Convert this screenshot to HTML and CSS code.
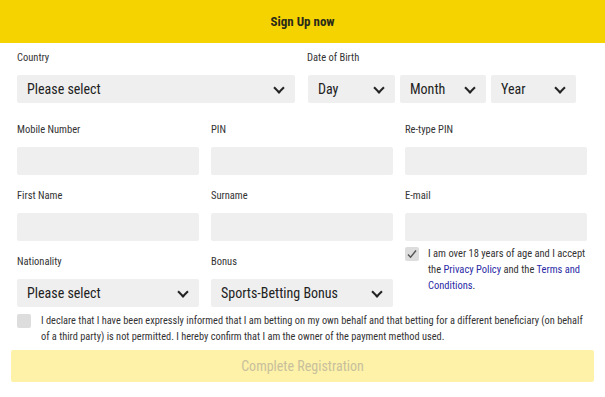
FILE: index.html
```html
<!DOCTYPE html>
<html lang="en">
<head>
    <meta charset="UTF-8"/>
    <meta name="viewport" content="width=device-width, initial-scale=1.0"/>
    <title>Sign Up</title>
    <link rel="stylesheet" href="styles.css">
</head>
<body>

<header class="header">
    <h1>Sign Up now</h1>
</header>

<main class="form">
    <div class="row row-top">
        <div class="field">
            <label>Country</label>
            <div class="select">Please select</div>
        </div>
        <div class="field">
            <label>Date of Birth</label>
            <div class="dob">
                <div class="select">Day</div>
                <div class="select">Month</div>
                <div class="select">Year</div>
            </div>
        </div>
    </div>

    <div class="row">
        <div class="field">
            <label>Mobile Number</label>
            <div class="input"></div>
        </div>
        <div class="field">
            <label>PIN</label>
            <div class="input"></div>
        </div>
        <div class="field">
            <label>Re-type PIN</label>
            <div class="input"></div>
        </div>
    </div>

    <div class="row">
        <div class="field">
            <label>First Name</label>
            <div class="input"></div>
        </div>
        <div class="field">
            <label>Surname</label>
            <div class="input"></div>
        </div>
        <div class="field">
            <label>E-mail</label>
            <div class="input"></div>
        </div>
    </div>

    <div class="row">
        <div class="field">
            <label>Nationality</label>
            <div class="select">Please select</div>
        </div>
        <div class="field">
            <label>Bonus</label>
            <div class="select">Sports-Betting Bonus</div>
        </div>
        <div class="consent">
            <span class="check checked">
                <svg width="12" height="12" viewBox="0 0 12 12"><path d="M2 6.5 L4.6 9.2 L10 2.5" fill="none" stroke="#555" stroke-width="1.4"/></svg>
            </span>
            <p>I am over 18 years of age and I accept the <a href="#">Privacy Policy</a> and the <a href="#">Terms and Conditions</a>.</p>
        </div>
    </div>

    <div class="declare">
        <span class="check"></span>
        <p>I declare that I have been expressly informed that I am betting on my own behalf and that betting for a different beneficiary (on behalf of a third party) is not permitted. I hereby confirm that I am the owner of the payment method used.</p>
    </div>

    <button class="submit">Complete Registration</button>
</main>

</body>
</html>
```

FILE: styles.css
```css
:root {
    --yellow: #f5d300;
    --field-bg: #efefef;
    --text-color: #222;
    --link-color: #2b2ba6;
}

* {
    margin: 0;
    padding: 0;
    box-sizing: border-box;
}

body {
    font-family: "Roboto Condensed", "Liberation Sans Narrow", "DejaVu Sans Condensed", Roboto, sans-serif;
    color: var(--text-color);
    background-color: white;
}

.header {
    height: 43px;
    background-color: var(--yellow);
    display: flex;
    align-items: center;
    justify-content: center;
}

.header h1 {
    font-size: 13px;
    font-weight: bold;
    color: #2a2a1a;
}

.form {
    padding: 8px 16px 0 17px;
}

.row {
    display: grid;
    grid-template-columns: 182px 182px 182px;
    gap: 12px;
    margin-bottom: 14px;
}

.row-top {
    grid-template-columns: 278px 272px;
    margin-bottom: 20px;
}

label {
    display: block;
    font-size: 10.5px;
    line-height: 14px;
    color: #333;
    margin-bottom: 10px;
}

.input,
.select {
    height: 28px;
    background-color: var(--field-bg);
    border-radius: 2px;
}

.select {
    display: flex;
    align-items: center;
    padding: 0 10px;
    font-size: 14px;
    color: #222;
    position: relative;
}

.select::after {
    content: "";
    position: absolute;
    right: 12px;
    top: 9px;
    width: 6px;
    height: 6px;
    border-right: 2px solid #222;
    border-bottom: 2px solid #222;
    transform: rotate(45deg);
}

.dob {
    display: grid;
    grid-template-columns: 87px 86px 85px;
    gap: 5px;
    padding-left: 1px;
}

.consent {
    display: flex;
    gap: 9px;
    margin-top: -9px;
}

.consent p,
.declare p {
    font-size: 10.5px;
    line-height: 16px;
    color: #333;
}

.declare p {
    font-size: 10.35px;
    max-width: 545px;
}

.consent a {
    color: var(--link-color);
    text-decoration: none;
}

.check {
    flex: none;
    width: 14px;
    height: 14px;
    margin-top: 1px;
    background-color: #ddd;
    border-radius: 2px;
    display: flex;
    align-items: center;
    justify-content: center;
}

.declare {
    display: flex;
    gap: 10px;
    margin-top: -8px;
}

.submit {
    display: block;
    width: 583px;
    height: 32px;
    margin: 5px 0 0 -6px;
    border: none;
    border-radius: 2px;
    background-color: #fdf2a8;
    color: #c8c09c;
    font-family: inherit;
    font-size: 14px;
}
```
